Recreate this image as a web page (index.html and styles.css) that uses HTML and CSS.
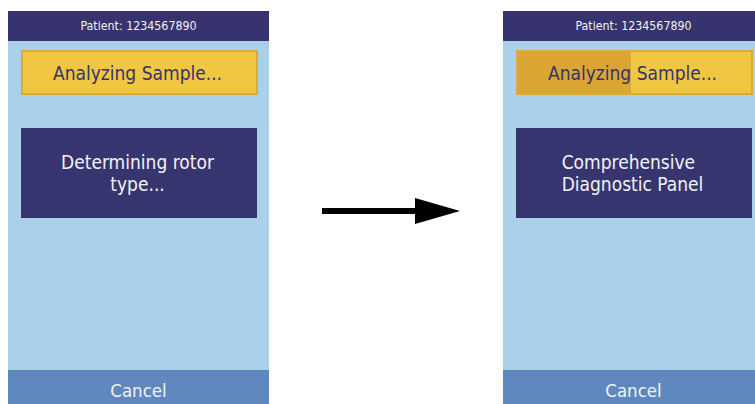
FILE: index.html
```html
<!DOCTYPE html>
<html>
<head>
<meta charset="utf-8">
<link rel="stylesheet" href="styles.css">
</head>
<body>
<div class="stage">
  <div class="screen">
    <div class="header">Patient: 1234567890</div>
    <div class="content">
      <div class="status"><span class="status-text">Analyzing Sample...</span></div>
      <div class="panel"><span class="panel-text">Determining rotor<br>type...</span></div>
    </div>
    <div class="cancel">Cancel</div>
  </div>
  <div class="arrow-area">
    <svg class="arrow" width="138" height="26" viewBox="0 0 138 26">
      <rect x="0" y="10" width="96" height="6" fill="#000"/>
      <polygon points="93,0 138,13 93,26" fill="#000"/>
    </svg>
  </div>
  <div class="screen">
    <div class="header">Patient: 1234567890</div>
    <div class="content">
      <div class="status"><div class="progress" style="width:113px"></div><span class="status-text">Analyzing Sample...</span></div>
      <div class="panel"><span class="panel-text panel-text-left">Comprehensive<br>Diagnostic Panel</span></div>
    </div>
    <div class="cancel">Cancel</div>
  </div>
</div>
</body>
</html>
```
FILE: styles.css
```css
html, body {
  margin: 0;
  padding: 0;
  background: #ffffff;
  overflow: hidden;
  width: 755px;
  height: 404px;
}
.stage {
  display: flex;
  padding: 11px 0 0 8px;
  font-family: "DejaVu Sans Condensed", "DejaVu Sans", sans-serif;
}
.screen {
  flex: none;
  width: 261px;
  height: 393px;
  background: #abd0ea;
  display: flex;
  flex-direction: column;
}
.header {
  height: 30px;
  background: #37336e;
  color: #f2f2f2;
  font-size: 12.3px;
  line-height: 30px;
  text-align: center;
}
.content {
  flex: 1;
  padding: 9px 0 0 13px;
  display: flex;
  flex-direction: column;
  gap: 33px;
}
.status {
  position: relative;
  width: 233px;
  height: 41px;
  background: #f1c641;
  border: 2px solid #dcaa38;
  display: flex;
  align-items: center;
  justify-content: center;
  color: #37336e;
  font-size: 19px;
}
.progress {
  position: absolute;
  left: 0;
  top: 0;
  bottom: 0;
  background: #dba533;
}
.status-text {
  position: relative;
  margin-left: -4px;
}
.panel {
  width: 236px;
  height: 90px;
  background: #37356f;
  color: #f2f2f2;
  font-size: 19px;
  line-height: 22px;
  display: flex;
  align-items: center;
  justify-content: center;
}
.panel-text {
  text-align: center;
  margin-left: -3px;
}
.panel-text-left {
  text-align: left;
}
.cancel {
  height: 34px;
  background: #5f88be;
  color: #f2f2f2;
  font-size: 18.5px;
  line-height: 42px;
  text-align: center;
}
.arrow-area {
  flex: none;
  width: 234px;
}
.arrow {
  display: block;
  margin: 187px 0 0 53px;
}
```
